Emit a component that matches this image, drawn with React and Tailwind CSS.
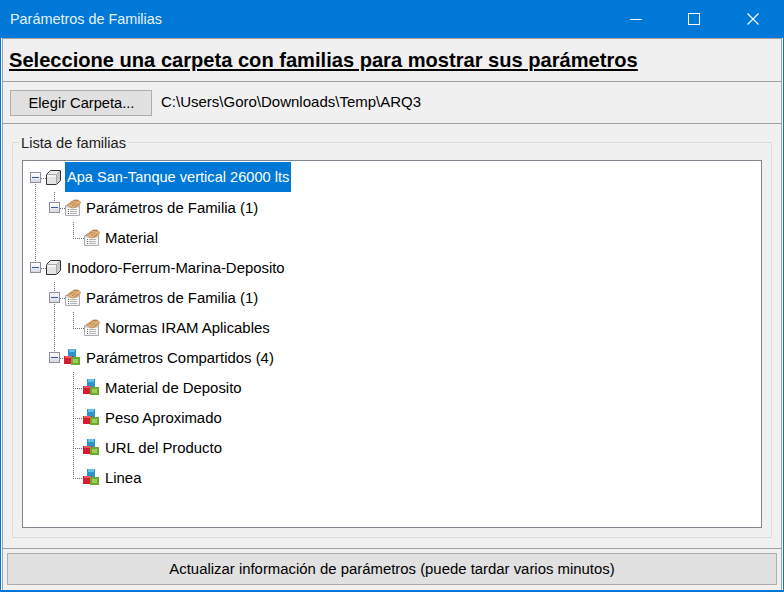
const FONT = "font-['Liberation_Sans',Arial,sans-serif]";

const TREE = [
  { depth: 0, icon: 'family', label: 'Apa San-Tanque vertical 26000 lts', expander: true, selected: true },
  { depth: 1, icon: 'param', label: 'Parámetros de Familia (1)', expander: true },
  { depth: 2, icon: 'param', label: 'Material' },
  { depth: 0, icon: 'family', label: 'Inodoro-Ferrum-Marina-Deposito', expander: true },
  { depth: 1, icon: 'param', label: 'Parámetros de Familia (1)', expander: true },
  { depth: 2, icon: 'param', label: 'Normas IRAM Aplicables' },
  { depth: 1, icon: 'shared', label: 'Parámetros Compartidos (4)', expander: true },
  { depth: 2, icon: 'shared', label: 'Material de Deposito' },
  { depth: 2, icon: 'shared', label: 'Peso Aproximado' },
  { depth: 2, icon: 'shared', label: 'URL del Producto' },
  { depth: 2, icon: 'shared', label: 'Linea' },
];

function FamilyIcon() {
  return (
    <svg width="17" height="17" viewBox="0 0 17 17" className="shrink-0">
      <path d="M1.5 5.5 L5.5 1.5 H15.5 V11.5 L11.5 15.5 H1.5 Z" fill="#ececec" stroke="#333" />
      <path d="M2 6 H11 V15 H2 Z" fill="#e4e4e4" />
      <path d="M2 6 H11 V8 H2 Z" fill="#f6f6f6" />
      <path d="M11.5 5.5 L15 2 V11 L11.5 15 Z" fill="#c8c8c8" />
      <path d="M1.5 5.5 H11.5 V15.5 M11.5 5.5 L15.5 1.5" fill="none" stroke="#a8a8a8" />
    </svg>
  );
}

function ParamIcon() {
  return (
    <svg width="17" height="17" viewBox="0 0 17 17" className="shrink-0">
      <path d="M1.5 6.5 H15.5 V16.5 H1.5 Z" fill="#f6f6f6" stroke="#adadad" />
      <path d="M2 7 H15 V9 H2 Z" fill="#dcdcdc" />
      <path d="M4 10.5 H5" stroke="#3f9a3f" />
      <path d="M4 12.5 H5" stroke="#d04a3a" />
      <path d="M4 14.5 H5" stroke="#3a66d0" />
      <path d="M6 10.5 H13 M6 12.5 H13 M6 14.5 H13" stroke="#b4b4b4" />
      <path d="M3 6 L7 3 L10 1 L14 1 L16.5 3 L15.5 6 L12 8 L9 9 L6 8 Z" fill="#e6b680" stroke="#b98248" strokeWidth="0.7" />
      <path d="M5.5 5.5 L9.5 3 M8 7 L12 3.5 M10.5 8 L14.5 4.5 M10 1.5 L14.5 2" stroke="#a96f38" strokeWidth="0.9" fill="none" />
    </svg>
  );
}

function SharedIcon() {
  return (
    <svg width="17" height="17" viewBox="0 0 17 17" className="-mt-[2px] shrink-0" shapeRendering="crispEdges">
      <rect x="4" y="1" width="8" height="8" rx="1" fill="#2a94c8" />
      <rect x="5" y="1" width="6" height="3" fill="#62c0e8" />
      <rect x="0" y="8" width="9" height="8" rx="1" fill="#d81c30" />
      <rect x="1" y="8" width="7" height="2" fill="#ee5a66" />
      <rect x="7" y="9" width="9" height="8" rx="1" fill="#6ea82c" />
      <rect x="9" y="11" width="5" height="4" fill="#9ad05a" />
    </svg>
  );
}

function Expander() {
  return (
    <span className="flex h-[11px] w-[11px] shrink-0 items-center justify-center border border-[#8f8f9d] bg-gradient-to-b from-white to-[#d8d8e2]">
      <span className="h-px w-[7px] bg-[#3c5aa8]" />
    </span>
  );
}

function TreeLines() {
  const v = [
    [35.5, 184, 263],
    [54.5, 192, 203],
    [73.5, 222, 238],
    [54.5, 282, 293],
    [54.5, 304, 353],
    [73.5, 312, 328],
    [73.5, 372, 478],
  ];
  const h = [
    [41, 46, 178.5],
    [41, 46, 268.5],
    [60, 65, 208.5],
    [60, 65, 298.5],
    [60, 65, 358.5],
    [73, 84, 238.5],
    [73, 84, 328.5],
    [73, 84, 388.5],
    [73, 84, 418.5],
    [73, 84, 448.5],
    [73, 84, 478.5],
  ];
  // coords are window based, the tree box starts at 23,161
  return (
    <svg className="absolute left-0 top-0 h-full w-full" shapeRendering="crispEdges">
      <g transform="translate(-23 -161)" stroke="#6e6e6e" strokeDasharray="1 1" fill="none">
        {v.map(([x, y1, y2]) => (
          <line key={`${x}-${y1}`} x1={x} y1={y1} x2={x} y2={y2} />
        ))}
        {h.map(([x1, x2, y]) => (
          <line key={`${x1}-${y}`} x1={x1} y1={y} x2={x2} y2={y} />
        ))}
      </g>
    </svg>
  );
}

function TreeRow({ depth, icon, label, expander, selected }) {
  const indent = ['pl-[7px]', 'pl-[26px]', 'pl-[45px]'][depth];
  return (
    <div className={`relative z-10 flex h-[30px] items-center ${indent}`}>
      <span className="flex w-[16px] shrink-0 items-center">{expander && <Expander />}</span>
      <span className="-ml-px flex w-[20px] shrink-0 items-center">
        {icon === 'family' && <FamilyIcon />}
        {icon === 'param' && <ParamIcon />}
        {icon === 'shared' && <SharedIcon />}
      </span>
      <span
        className={`flex h-[30px] items-center px-[2px] pt-[2px] ${
          selected ? 'bg-[#0078d7] text-[14.6px] text-white' : 'text-[14.9px] text-black'
        }`}
      >
        {label}
      </span>
    </div>
  );
}

export default function App() {
  return (
    <div className={`flex h-[592px] w-[784px] flex-col overflow-hidden bg-[#0078d7] pb-[2px] pl-px pr-px ${FONT}`}>
      <div className="flex h-[38px] shrink-0 items-center justify-between pl-[9px] text-white">
        <span className="pt-px text-[14.4px] text-[#e8f2fb]">Parámetros de Familias</span>
        <div className="flex items-center">
          <span className="flex h-[38px] w-[58px] items-center justify-center">
            <svg width="12" height="12" viewBox="0 0 12 12" shapeRendering="crispEdges">
              <path d="M0 6.5 H12" stroke="#fff" />
            </svg>
          </span>
          <span className="flex h-[38px] w-[58px] items-center justify-center">
            <svg width="12" height="12" viewBox="0 0 12 12" shapeRendering="crispEdges">
              <rect x="0.5" y="0.5" width="11" height="11" fill="none" stroke="#fff" />
            </svg>
          </span>
          <span className="flex h-[38px] w-[60px] items-center justify-center">
            <svg width="12" height="12" viewBox="0 0 12 12">
              <path d="M0.5 0.5 L11.5 11.5 M11.5 0.5 L0.5 11.5" stroke="#fff" strokeWidth="1.1" />
            </svg>
          </span>
        </div>
      </div>

      <div className="flex min-h-0 flex-1 flex-col border-x border-white bg-[#f0f0f0]">
        <div className="flex h-[44px] shrink-0 items-center border-x border-t border-b border-[#a0a0a0] pl-[6px]">
          <h1 className="text-[20.1px] font-bold text-black underline underline-offset-2">
            Seleccione una carpeta con familias para mostrar sus parámetros
          </h1>
        </div>

        <div className="flex h-[42px] shrink-0 items-center gap-[9px] border-x border-b border-[#a0a0a0] pl-[7px] text-black">
          <button className="h-[26px] w-[142px] border border-[#adadad] bg-[#e1e1e1] pl-px text-[14.67px]">
            Elegir Carpeta...
          </button>
          <span className="text-[15px]">C:\Users\Goro\Downloads\Temp\ARQ3</span>
        </div>

        <div className="flex min-h-0 flex-1 flex-col border-x border-b border-[#a0a0a0] px-[9px] pb-[10px] pt-[10px]">
          <fieldset className="flex min-h-0 flex-1 flex-col border border-[#dcdcdc] px-[9px] pb-[9px] pt-[9px]">
            <legend className="-ml-[3px] px-[2px] pt-[2px] text-[14.67px] leading-[15px] text-[#222]">Lista de familias</legend>
            <div className="relative flex-1 border border-[#828790] bg-white pt-px">
              <TreeLines />
              {TREE.map((node, i) => (
                <TreeRow key={i} {...node} />
              ))}
            </div>
          </fieldset>
        </div>

        <div className="h-[41px] shrink-0 border-x border-[#a0a0a0] px-[4px] pt-[4px]">
          <button className="h-[32px] w-full border border-[#adadad] bg-[#e1e1e1] text-[14.9px] text-black">
            Actualizar información de parámetros (puede tardar varios minutos)
          </button>
        </div>
      </div>
    </div>
  );
}
